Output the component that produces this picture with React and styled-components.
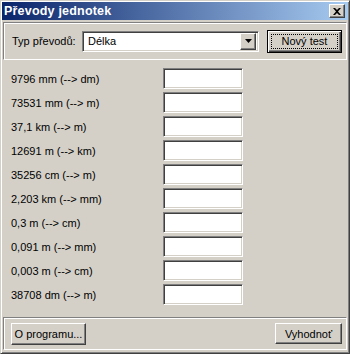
import { Fragment } from "react";
import styled, { createGlobalStyle, css } from "styled-components";

const GlobalStyle = createGlobalStyle`
  html, body {
    margin: 0;
    padding: 0;
    background: #d4d0c8;
  }
  * {
    box-sizing: border-box;
  }
`;

const face = "#d4d0c8";
const shadow = "#808080";
const dark = "#404040";

const raised = css`
  background: ${face};
  border: 1px solid;
  border-color: #fff ${dark} ${dark} #fff;
  box-shadow: inset -1px -1px ${shadow};
`;

const sunken = css`
  background: #fff;
  border: 1px solid;
  border-color: ${shadow} #fff #fff ${shadow};
  box-shadow: inset 1px 1px ${dark}, inset -1px -1px ${face};
`;

const Window = styled.div`
  width: 350px;
  height: 354px;
  display: flex;
  flex-direction: column;
  padding: 1px;
  background: ${face};
  border: 1px solid;
  border-color: ${face} ${dark} ${dark} ${face};
  box-shadow: inset 1px 1px #fff, inset -1px -1px ${shadow};
  font-family: "Liberation Sans", Arial, sans-serif;
  font-size: 11px;
  color: #000;
`;

const TitleBar = styled.div`
  height: 18px;
  display: flex;
  align-items: center;
  justify-content: space-between;
  padding: 0 3px 0 2px;
  background: linear-gradient(to right, #0a246a, #a6caf0);
`;

const Title = styled.span`
  color: #fff;
  font-weight: bold;
  font-size: 12.5px;
  letter-spacing: 0.2px;
`;

const CloseButton = styled.div`
  ${raised};
  width: 16px;
  height: 14px;
  display: flex;
  align-items: center;
  justify-content: center;
`;

const Panel = styled.div`
  margin: ${(p) => (p.$bottom ? "auto 1px 2px" : "2px 1px 0")};
  height: ${(p) => p.$height}px;
  display: flex;
  align-items: center;
  border: 1px solid;
  border-color: ${shadow} #fff #fff ${shadow};
  box-shadow: inset 1px 1px #fff;
  padding: ${(p) => p.$pad};
  justify-content: ${(p) => (p.$bottom ? "space-between" : "flex-start")};
`;

const TypeLabel = styled.span`
  width: 70px;
`;

const Select = styled.div`
  ${sunken};
  width: 177px;
  height: 21px;
  display: flex;
  align-items: center;
  padding: 2px 2px 2px 5px;
  margin-right: 8px;
`;

const SelectValue = styled.span`
  flex: 1;
`;

const ArrowButton = styled.div`
  ${raised};
  width: 16px;
  height: 17px;
  display: flex;
  align-items: center;
  justify-content: center;
`;

const Button = styled.div`
  width: ${(p) => p.$width}px;
  height: ${(p) => p.$height}px;
  display: flex;
  align-items: center;
  justify-content: center;
  ${(p) =>
    p.$default
      ? css`
          background: ${face};
          border: 1px solid #000;
          box-shadow: inset 1px 1px #fff, inset -1px -1px ${dark},
            inset -2px -2px ${shadow};
          padding: 3px;
        `
      : raised}
`;

const FocusRect = styled.span`
  flex: 1;
  align-self: stretch;
  display: flex;
  align-items: center;
  justify-content: center;
  border: 1px dotted #000;
`;

const Rows = styled.div`
  margin-top: 8px;
  padding-left: 9px;
  display: grid;
  grid-template-columns: 152px 80px;
  grid-auto-rows: 21px;
  row-gap: 3px;
  align-items: center;
`;

const Input = styled.div`
  ${sunken};
  width: 80px;
  height: 21px;
`;

const tasks = [
  "9796 mm (--> dm)",
  "73531 mm (--> m)",
  "37,1 km (--> m)",
  "12691 m (--> km)",
  "35256 cm (--> m)",
  "2,203 km (--> mm)",
  "0,3 m (--> cm)",
  "0,091 m (--> mm)",
  "0,003 m (--> cm)",
  "38708 dm (--> m)",
];

function App() {
  return (
    <>
      <GlobalStyle />
      <Window>
        <TitleBar>
          <Title>Převody jednotek</Title>
          <CloseButton>
            <svg width="8" height="7" viewBox="0 0 8 7">
              <path d="M0 0h2l2 2 2-2h2L5 3.5 8 7H6L4 5 2 7H0l3-3.5z" fill="#000" />
            </svg>
          </CloseButton>
        </TitleBar>
        <Panel $height={38} $pad="0 4px 0 8px">
          <TypeLabel>Typ převodů:</TypeLabel>
          <Select>
            <SelectValue>Délka</SelectValue>
            <ArrowButton>
              <svg width="7" height="4" viewBox="0 0 7 4">
                <path d="M0 0h7L3.5 4z" fill="#000" />
              </svg>
            </ArrowButton>
          </Select>
          <Button $width={75} $height={23} $default>
            <FocusRect>Nový test</FocusRect>
          </Button>
        </Panel>
        <Rows>
          {tasks.map((t) => (
            <Fragment key={t}>
              <span>{t}</span>
              <Input />
            </Fragment>
          ))}
        </Rows>
        <Panel $bottom $height={33} $pad="0 4px 0 7px">
          <Button $width={75} $height={22}>
            O programu...
          </Button>
          <Button $width={67} $height={21}>
            Vyhodnoť
          </Button>
        </Panel>
      </Window>
    </>
  );
}

export default App;
